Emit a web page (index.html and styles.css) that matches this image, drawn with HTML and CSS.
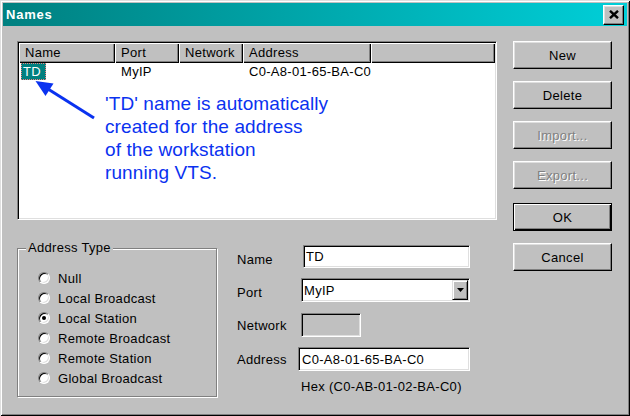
FILE: index.html
```html
<!DOCTYPE html>
<html>
<head>
<meta charset="utf-8">
<title>Names</title>
<link rel="stylesheet" href="styles.css">
</head>
<body>
<div class="window">
  <div class="titlebar">
    <span class="title">Names</span>
    <span class="close-btn">
      <svg width="10" height="9" viewBox="0 0 10 9"><path d="M1 0.8 L9 8.2 M9 0.8 L1 8.2" stroke="#000" stroke-width="2.4" fill="none"/></svg>
    </span>
  </div>
  <div class="body">
    <div class="left">
      <div class="list">
        <div class="list-head">
          <div class="hcell c-name">Name</div>
          <div class="hcell c-port">Port</div>
          <div class="hcell c-net">Network</div>
          <div class="hcell c-addr">Address</div>
          <div class="hcell c-rest"></div>
        </div>
        <div class="list-row">
          <div class="cell c-name first"><span class="sel">TD</span></div>
          <div class="cell c-port">MyIP</div>
          <div class="cell c-net"></div>
          <div class="cell c-addr">C0-A8-01-65-BA-C0</div>
        </div>
        <svg class="arrow" width="100" height="90" viewBox="0 0 100 90">
          <line x1="30" y1="47" x2="76" y2="76" stroke="#0a32f0" stroke-width="3"/>
          <polygon points="17.5,39 27.5,54 35.5,41.5" fill="#0a32f0"/>
        </svg>
        <div class="note">'TD' name is automatically<br>created for the address<br>of the workstation<br>running VTS.</div>
      </div>
      <div class="bottom">
        <fieldset class="group">
          <legend>Address Type</legend>
          <div class="radio-row"><span class="radio"></span><span class="rlabel">Null</span></div>
          <div class="radio-row"><span class="radio"></span><span class="rlabel">Local Broadcast</span></div>
          <div class="radio-row"><span class="radio checked"></span><span class="rlabel">Local Station</span></div>
          <div class="radio-row"><span class="radio"></span><span class="rlabel">Remote Broadcast</span></div>
          <div class="radio-row"><span class="radio"></span><span class="rlabel">Remote Station</span></div>
          <div class="radio-row"><span class="radio"></span><span class="rlabel">Global Broadcast</span></div>
        </fieldset>
        <div class="form">
          <div class="frow r1">
            <span class="flabel low">Name</span>
            <span class="field f-name">TD</span>
          </div>
          <div class="frow r2">
            <span class="flabel low">Port</span>
            <span class="field f-port">MyIP<span class="dd"><svg width="7" height="4" viewBox="0 0 7 4"><polygon points="0,0 7,0 3.5,4" fill="#000"/></svg></span></span>
          </div>
          <div class="frow r3">
            <span class="flabel">Network</span>
            <span class="field f-net"></span>
          </div>
          <div class="frow r4">
            <span class="flabel">Address</span>
            <span class="field f-addr">C0-A8-01-65-BA-C0</span>
          </div>
          <div class="hex">Hex (C0-AB-01-02-BA-C0)</div>
        </div>
      </div>
    </div>
    <div class="buttons">
      <div class="btn">New</div>
      <div class="btn">Delete</div>
      <div class="btn disabled">Import...</div>
      <div class="btn disabled">Export...</div>
      <div class="btn default">OK</div>
      <div class="btn">Cancel</div>
    </div>
  </div>
</div>
</body>
</html>
```
FILE: styles.css
```css
html, body {
  margin: 0;
  padding: 0;
  background: #c0c0c0;
}
body {
  font-family: "Liberation Sans", Arial, sans-serif;
  font-size: 13px;
  letter-spacing: 0.3px;
  color: #000;
}
.window {
  width: 630px;
  height: 416px;
  box-sizing: border-box;
  padding: 3px;
  background: #c0c0c0;
  box-shadow: inset 1px 1px 0 #dfdfdf, inset -1px -1px 0 #000, inset 2px 2px 0 #fff, inset -2px -2px 0 #808080;
  display: flex;
  flex-direction: column;
}
.titlebar {
  height: 23px;
  background: linear-gradient(to right, #008080, #00cfd8);
  display: flex;
  align-items: center;
  justify-content: space-between;
  padding-left: 3px;
  padding-right: 3px;
}
.title {
  color: #fff;
  font-weight: bold;
  letter-spacing: 0.8px;
}
.close-btn {
  width: 21px;
  height: 20px;
  box-sizing: border-box;
  background: #c0c0c0;
  border: 1px solid;
  border-color: #fff #000 #000 #fff;
  box-shadow: inset -1px -1px 0 #808080, inset 1px 1px 0 #dfdfdf;
  display: flex;
  align-items: center;
  justify-content: center;
}
.body {
  display: flex;
  padding: 15px 0 0 14px;
}
.left {
  width: 480px;
}
.list {
  position: relative;
  width: 480px;
  height: 179px;
  box-sizing: border-box;
  background: #fff;
  border: 1px solid;
  border-color: #808080 #fff #fff #808080;
  box-shadow: inset 1px 1px 0 #000, inset -1px -1px 0 #dfdfdf;
  padding: 1px;
  overflow: hidden;
}
.list-head {
  display: flex;
  height: 20px;
}
.hcell {
  box-sizing: border-box;
  height: 20px;
  line-height: 19px;
  padding-left: 6px;
  background: #c0c0c0;
  box-shadow: inset 1px 1px 0 #fff, inset -1px -1px 0 #000, inset -2px -2px 0 #808080;
}
.c-name { width: 96px; flex: none; }
.c-port { width: 64px; flex: none; }
.c-net { width: 64px; flex: none; }
.c-addr { width: 128px; flex: none; }
.c-rest { flex: 1; }
.list-row {
  display: flex;
  height: 17px;
  align-items: center;
  white-space: nowrap;
}
.cell {
  box-sizing: border-box;
  padding-left: 6px;
}
.cell.first {
  padding-left: 2px;
}
.sel {
  display: inline-block;
  background: #008080;
  color: #fff;
  height: 17px;
  line-height: 15px;
  box-sizing: border-box;
  padding: 0 4px 0 1px;
  border: 1px dotted #f08080;
}
.arrow {
  position: absolute;
  left: 0;
  top: 0;
}
.note {
  position: absolute;
  left: 87px;
  top: 50px;
  font-size: 19px;
  line-height: 23px;
  letter-spacing: 0.1px;
  color: #0a32f0;
  white-space: nowrap;
}
.bottom {
  display: flex;
  margin-top: 20px;
}
.group {
  width: 200px;
  box-sizing: border-box;
  margin: 0;
  min-width: 0;
  padding: 12px 0 8px 0;
  border: 1px solid #808080;
  box-shadow: inset 1px 1px 0 #fff, 1px 1px 0 #fff;
}
.group legend {
  margin-left: 8px;
  padding: 0 2px;
  line-height: 16px;
  background: #c0c0c0;
}
.radio-row {
  height: 20px;
  display: flex;
  align-items: center;
  padding-left: 20px;
}
.radio {
  position: relative;
  width: 12px;
  height: 12px;
  box-sizing: border-box;
  border-radius: 50%;
  background: #fff;
  border: 1px solid;
  border-color: #808080 #fff #fff #808080;
  box-shadow: inset 1px 1px 0 #000, inset -1px -1px 0 #dfdfdf;
}
.radio.checked::after {
  content: "";
  position: absolute;
  left: 3px;
  top: 3px;
  width: 4px;
  height: 4px;
  border-radius: 50%;
  background: #000;
}
.rlabel {
  margin-left: 8px;
}
.form {
  margin-left: 20px;
  padding-top: 5px;
}
.frow {
  display: flex;
  align-items: center;
  white-space: nowrap;
}
.r1 { height: 23px; margin-bottom: 10px; }
.r2 { height: 24px; margin-bottom: 11px; }
.r3 { height: 24px; margin-bottom: 10px; }
.r4 { height: 24px; margin-bottom: 8px; }
.flabel {
  width: 64px;
  flex: none;
}
.flabel.low {
  padding-top: 5px;
}
.field {
  position: relative;
  height: 100%;
  box-sizing: border-box;
  background: #fff;
  border: 1px solid;
  border-color: #808080 #fff #fff #808080;
  box-shadow: inset 1px 1px 0 #000, inset -1px -1px 0 #dfdfdf;
  display: flex;
  align-items: center;
  padding-left: 2px;
  flex: none;
}
.f-name { width: 167px; margin-left: 2px; }
.f-port { width: 169px; padding-left: 2px; }
.f-net { width: 60px; background: #c0c0c0; }
.f-addr { width: 172px; margin-left: -3px; padding-left: 3px; }
.dd {
  position: absolute;
  right: 1px;
  top: 1px;
  bottom: 1px;
  width: 16px;
  box-sizing: border-box;
  background: #c0c0c0;
  border: 1px solid;
  border-color: #dfdfdf #000 #000 #dfdfdf;
  box-shadow: inset 1px 1px 0 #fff, inset -1px -1px 0 #808080;
  display: flex;
  align-items: center;
  justify-content: center;
}
.hex {
  padding-left: 64px;
  line-height: 16px;
}
.buttons {
  margin-left: 16px;
  width: 99px;
  display: flex;
  flex-direction: column;
  gap: 12px;
}
.btn {
  height: 28px;
  box-sizing: border-box;
  border: 1px solid;
  border-color: #fff #000 #000 #fff;
  box-shadow: inset -1px -1px 0 #808080, inset 1px 1px 0 #dfdfdf;
  display: flex;
  align-items: center;
  justify-content: center;
}
.btn.disabled {
  color: #808080;
  text-shadow: 1px 1px 0 #fff;
}
.btn.default {
  margin-top: 2px;
  border-color: #000;
  box-shadow: inset 1px 1px 0 #fff, inset -1px -1px 0 #000, inset -2px -2px 0 #808080;
}
```
